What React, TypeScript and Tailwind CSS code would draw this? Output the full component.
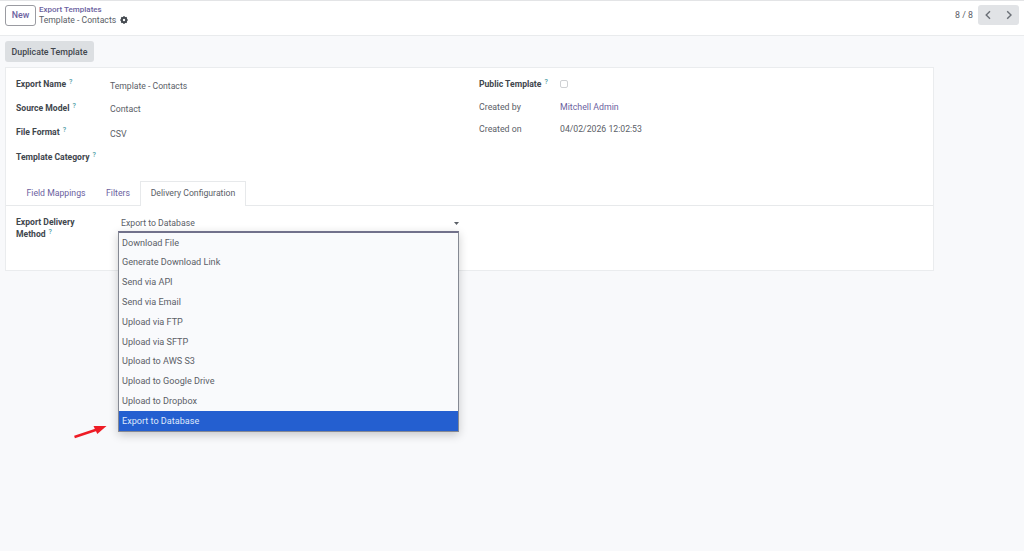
import type { ReactNode } from "react";

const deliveryMethods = [
  "Download File",
  "Generate Download Link",
  "Send via API",
  "Send via Email",
  "Upload via FTP",
  "Upload via SFTP",
  "Upload to AWS S3",
  "Upload to Google Drive",
  "Upload to Dropbox",
  "Export to Database",
];

const selectedMethod = "Export to Database";

function Label({ children }: { children: ReactNode }) {
  return (
    <span className="text-[8.6px] font-bold text-[#41464d]">
      {children}
      <sup className="relative -top-[3px] ml-[3px] align-baseline text-[7px] leading-none font-medium text-[#4b9aa3]">
        ?
      </sup>
    </span>
  );
}

function GearIcon() {
  return (
    <svg width="8" height="8" viewBox="0 0 16 16" className="ml-[4px]">
      <g fill="#454a50">
        <rect x="6.3" y="0.5" width="3.4" height="15" rx="0.6" />
        <rect x="0.5" y="6.3" width="15" height="3.4" rx="0.6" />
        <rect x="6.3" y="0.5" width="3.4" height="15" rx="0.6" transform="rotate(45 8 8)" />
        <rect x="6.3" y="0.5" width="3.4" height="15" rx="0.6" transform="rotate(-45 8 8)" />
        <circle cx="8" cy="8" r="6.4" />
      </g>
      <circle cx="8" cy="8" r="2.4" fill="#fff" />
    </svg>
  );
}

function Header() {
  return (
    <header className="flex h-9 items-start justify-between border-t border-b border-t-[#e3e4e6] border-b-[#e9ebed] bg-white pt-[4px] pr-[5px] pl-[5px]">
      <div className="flex">
        <button
          type="button"
          className="h-[21px] w-[31px] rounded-[3px] border border-[#9a9ba1] bg-white pb-[2px] font-medium text-[#6b61a0]"
        >
          New
        </button>
        <div className="ml-[3px] leading-[10px]">
          <a className="block text-[8px] font-medium text-[#6b61a0]">Export Templates</a>
          <div className="flex items-center text-[8.65px] text-[#5b6067]">
            Template - Contacts
            <GearIcon />
          </div>
        </div>
      </div>
      <div className="flex items-center">
        <span className="mr-[5px] text-[#5b6067]">8 / 8</span>
        <div className="flex h-[20px] w-[41px] items-center justify-around rounded-[3px] bg-[#e1e3e6]">
          <svg width="10" height="10" viewBox="0 0 10 10" fill="none" stroke="#6a6f76" strokeWidth="1.4">
            <path d="M7 1.2 3.2 5 7 8.8" />
          </svg>
          <svg width="10" height="10" viewBox="0 0 10 10" fill="none" stroke="#6a6f76" strokeWidth="1.4">
            <path d="M3.2 1.2 7 5 3.2 8.8" />
          </svg>
        </div>
      </div>
    </header>
  );
}

function Details() {
  return (
    <div className="flex pt-[4px] pl-[10px]">
      <div className="grid w-[463px] auto-rows-[24.2px] grid-cols-[94px_1fr] items-center">
        <Label>Export Name</Label>
        <span className="pt-[3px] text-[8.65px]">Template - Contacts</span>
        <Label>Source Model</Label>
        <span className="pt-[2px]">Contact</span>
        <Label>File Format</Label>
        <span className="pt-[4px]">CSV</span>
        <Label>Template Category</Label>
      </div>
      <div className="grid auto-rows-[22.5px] grid-cols-[81px_1fr] content-start items-center pt-px">
        <Label>Public Template</Label>
        <span className="h-[8px] w-[8px] rounded-[2px] border border-[#cfd1d4] bg-white" />
        <span>Created by</span>
        <a className="text-[#6b61a0]">Mitchell Admin</a>
        <span>Created on</span>
        <span className="text-[8.7px]">04/02/2026 12:02:53</span>
      </div>
    </div>
  );
}

function Tabs() {
  return (
    <nav className="mt-[12px] flex h-[25px] items-stretch border-b border-[#e7e9eb] pl-[10px] text-[8.7px] text-[#6b61a0]">
      <a className="flex w-[80px] items-center justify-center">Field Mappings</a>
      <a className="flex w-[44px] items-center justify-center">Filters</a>
      <a className="-mb-px flex w-[106px] items-center justify-center border border-b-0 border-[#e7e9eb] bg-white pb-px text-[#5b6067]">
        Delivery Configuration
      </a>
    </nav>
  );
}

function DeliverySelect() {
  return (
    <div className="relative h-[26px] w-[341px]">
      <div className="flex h-full items-center justify-between border-b border-[#6b61a0] pt-[10px] pl-[3px] text-[8.7px]">
        {selectedMethod}
        <svg width="5" height="3" viewBox="0 0 5 3">
          <path d="M0 0h5L2.5 3z" fill="#5b6067" />
        </svg>
      </div>
      <ul className="absolute top-[25px] left-0 w-[341px] border border-t-2 border-[#858993] border-t-[#71718b] bg-[#f9fafc] text-[9.1px] shadow-[0_3px_9px_rgba(0,0,0,0.2)]">
        {deliveryMethods.map((method) => (
          <li
            key={method}
            className={
              method === selectedMethod
                ? "flex h-[19.8px] items-center bg-[#245fd0] pl-[3px] text-[#dfe8fb]"
                : "flex h-[19.8px] items-center pl-[3px]"
            }
          >
            {method}
          </li>
        ))}
      </ul>
    </div>
  );
}

export default function App() {
  return (
    <div className="relative h-[551px] w-[1024px] overflow-hidden bg-[#f8f9fb] font-[Roboto,sans-serif] text-[8.8px] leading-[12px] text-[#5b6067]">
      <Header />
      <main className="pt-[5px] pl-[5px]">
        <button
          type="button"
          className="block h-[21px] w-[89px] rounded-[3px] bg-[#dcdfe2] font-medium text-[#41464d]"
        >
          Duplicate Template
        </button>
        <section className="mt-[5px] h-[204px] w-[929px] border border-[#eaecee] bg-white">
          <Details />
          <Tabs />
          <div className="flex pl-[10px]">
            <div className="w-[102px] pt-[10px]">
              <Label>
                Export Delivery
                <br />
                Method
              </Label>
            </div>
            <DeliverySelect />
          </div>
        </section>
      </main>
      <svg className="absolute top-[424px] left-[73px]" width="34" height="15" viewBox="0 0 34 15">
        <path d="M1.5 13 24 5.5" stroke="#ee1c25" strokeWidth="2.4" />
        <path d="M33.5 2 20.5 2l3.8 8z" fill="#ee1c25" />
      </svg>
    </div>
  );
}
